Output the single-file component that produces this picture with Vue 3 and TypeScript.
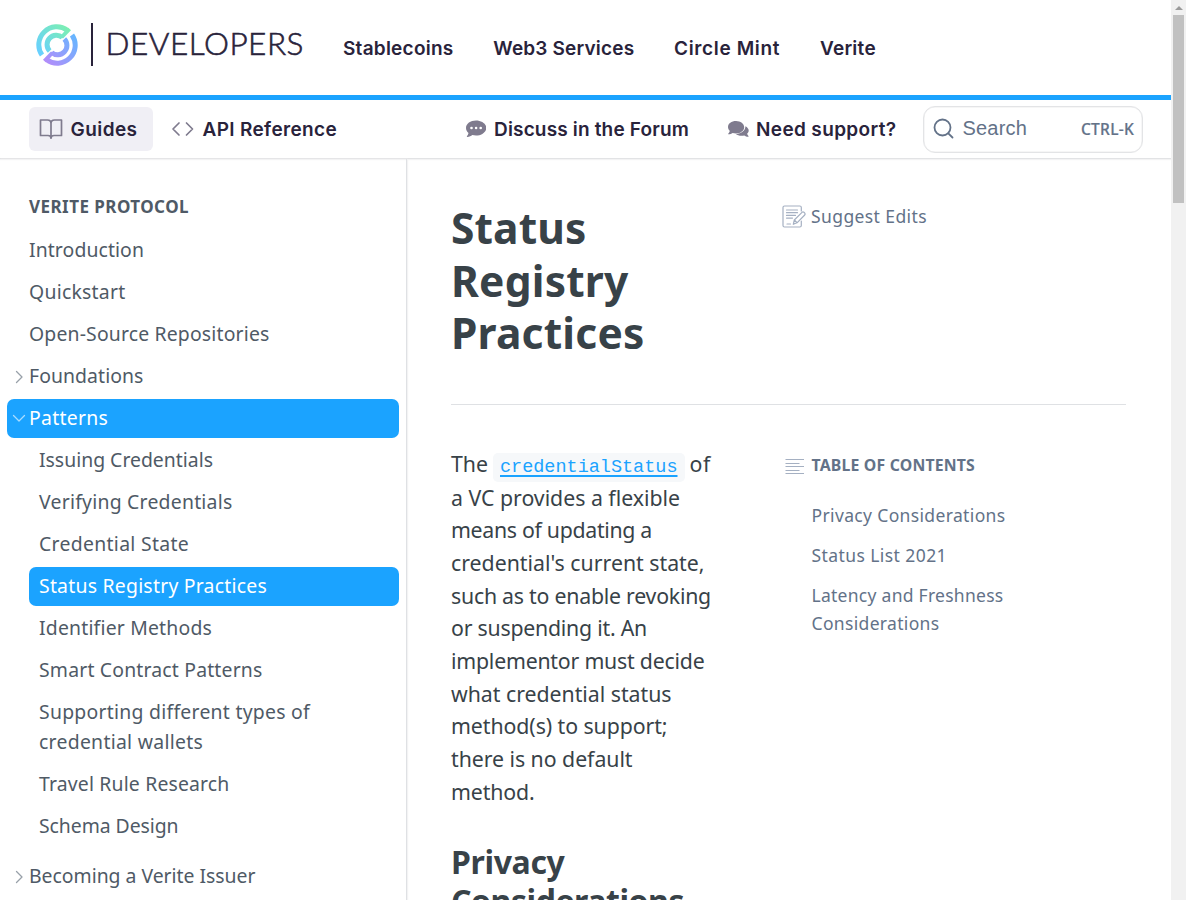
<script setup lang="ts">
import type { Directive } from 'vue'

interface Line { text: string; w: number }
interface Item { lines: Line[]; chevron?: 'right' | 'down'; active?: boolean; children?: Item[] }

// Tracks the text in or out so that it fills the given width in pixels.
const vFit: Directive<HTMLElement, number> = {
  mounted(el, { value }) {
    const n = (el.textContent ?? '').length
    const natural = el.getBoundingClientRect().width
    if (n > 0) el.style.letterSpacing = `${(value - natural) / n}px`
  },
}

const one = (text: string, w: number): Item => ({ lines: [{ text, w }] })

const products: Line[] = [
  { text: 'Stablecoins', w: 110.5 },
  { text: 'Web3 Services', w: 141 },
  { text: 'Circle Mint', w: 106 },
  { text: 'Verite', w: 56 },
]

const sidebar: Item[] = [
  one('Introduction', 115),
  one('Quickstart', 96.5),
  one('Open-Source Repositories', 240.5),
  { ...one('Foundations', 114.5), chevron: 'right' },
  {
    ...one('Patterns', 79),
    chevron: 'down',
    active: true,
    children: [
      one('Issuing Credentials', 174),
      one('Verifying Credentials', 193.5),
      one('Credential State', 150),
      { ...one('Status Registry Practices', 228), active: true },
      one('Identifier Methods', 173),
      one('Smart Contract Patterns', 223.5),
      { lines: [{ text: 'Supporting different types of', w: 271 }, { text: 'credential wallets', w: 164 }] },
      one('Travel Rule Research', 190.5),
      one('Schema Design', 139.5),
    ],
  },
  { ...one('Becoming a Verite Issuer', 226.5), chevron: 'right' },
]

const title: Line[] = [
  { text: 'Status', w: 135.5 },
  { text: 'Registry', w: 177.5 },
  { text: 'Practices', w: 193.5 },
]

const paragraph: Line[] = [
  { text: 'a VC provides a flexible', w: 229 },
  { text: 'means of updating a', w: 201 },
  { text: "credential's current state,", w: 253.5 },
  { text: 'such as to enable revoking', w: 260 },
  { text: 'or suspending it. An', w: 196 },
  { text: 'implementor must decide', w: 253.5 },
  { text: 'what credential status', w: 220.5 },
  { text: 'method(s) to support;', w: 216.5 },
  { text: 'there is no default', w: 181.5 },
  { text: 'method.', w: 83.5 },
]

const toc: Item[] = [
  one('Privacy Considerations', 194),
  one('Status List 2021', 135.5),
  { lines: [{ text: 'Latency and Freshness', w: 192 }, { text: 'Considerations', w: 128 }] },
]
</script>

<template>
  <div class="window">
    <div class="page">
      <header class="top">
        <div class="logo">
          <svg class="mark" viewBox="0 0 126 126">
            <defs>
              <linearGradient id="mint" gradientUnits="userSpaceOnUse" x1="5" y1="100" x2="100" y2="10">
                <stop offset="0.1" stop-color="#68d0ff" />
                <stop offset="1" stop-color="#7cf0b0" />
              </linearGradient>
              <linearGradient id="violet" gradientUnits="userSpaceOnUse" x1="30" y1="115" x2="120" y2="30">
                <stop offset="0" stop-color="#b28dfa" />
                <stop offset="1" stop-color="#62b8ff" />
              </linearGradient>
            </defs>
            <g stroke="url(#mint)" fill="none" stroke-width="15">
              <path d="M94 18.500A54 54 0 0 0 18 93" />
              <path d="M79 40A28 28 0 0 0 41 81" />
              <path d="M97 11L105 19L82 43L68 42L86 21Z" fill="url(#mint)" stroke="none" />
            </g>
            <g stroke="url(#violet)" fill="none" stroke-width="15">
              <path d="M108 33A54 54 0 0 1 32 107.500" />
              <path d="M85 45A28 28 0 0 1 47 86" />
              <path d="M29 115L21 107L44 83L58 84L40 105Z" fill="url(#violet)" stroke="none" />
            </g>
          </svg>
          <i class="rule"></i>
          <span v-fit="198.500" class="brand">DEVELOPERS</span>
        </div>
        <nav class="products">
          <a v-for="p in products" :key="p.text"><span v-fit="p.w">{{ p.text }}</span></a>
        </nav>
      </header>

      <div class="subnav">
        <a class="tab current">
          <svg width="24" height="24" viewBox="0 0 24 24" fill="none" stroke="#7f7b8e" stroke-width="1.700" stroke-linejoin="round">
            <path d="M12 6.500C12 4.500 10.500 3 8.500 3H1.500v15.500H9c1.800 0 3 .9 3 2.700 0-1.800 1.200-2.700 3-2.700h7.500V3h-7C13.500 3 12 4.500 12 6.500zV21" />
          </svg>
          <span v-fit="67">Guides</span>
        </a>
        <a class="tab">
          <svg width="24" height="24" viewBox="0 0 24 24" fill="none" stroke="#7f7b8e" stroke-width="1.700" stroke-linecap="round" stroke-linejoin="round">
            <path d="M8 6L2 12l6 6M15.500 6L21.500 12l-6 6" />
          </svg>
          <span v-fit="134.500">API Reference</span>
        </a>
        <a class="link forum">
          <svg width="20" height="20" viewBox="0 0 20 20">
            <path fill="#7f7b8e" d="M10 1.500C4.500 1.500 0 4.700 0 8.900c0 2 1 3.700 2.500 5-.2 1.300-.8 2.400-1.600 3.300-.3.400 0 .8.400.8 2.100 0 3.800-.8 5-1.900 1.100.3 2.400.5 3.700.5 5.500 0 10.300-3.500 10.300-7.700S15.500 1.500 10 1.500z" />
            <g fill="#fff"><circle cx="5.500" cy="9" r="1.300" /><circle cx="10.100" cy="9" r="1.300" /><circle cx="14.700" cy="9" r="1.300" /></g>
          </svg>
          <span v-fit="195">Discuss in the Forum</span>
        </a>
        <a class="link support">
          <svg width="21" height="20" viewBox="0 0 21 20">
            <path fill="#7f7b8e" d="M8 2C3.500 2 0 4.500 0 8c0 1.500.7 2.900 1.800 4-.3 1-.9 2-1.600 2.700-.2.300 0 .6.300.6 1.600 0 3-.5 4.100-1.400 1.100.300 2.200.5 3.400.5 4.600 0 8.200-2.800 8.200-6.200S12.500 2 8 2z" />
            <path fill="#7f7b8e" d="M17.400 7.200c2 1 3.300 2.600 3.300 4.300 0 1.300-.6 2.400-1.600 3.300.3 1 .8 1.700 1.400 2.300.3.300.1.600-.3.600-1.500 0-2.800-.5-3.900-1.300-3.500.9-6.700 0-8.400-1.500 5.500-.3 9.700-3.500 9.500-7.700z" />
          </svg>
          <span v-fit="140.500">Need support?</span>
        </a>
        <div class="search">
          <svg width="22" height="22" viewBox="0 0 22 22" fill="none" stroke="#637288" stroke-width="1.800" stroke-linecap="round">
            <circle cx="9.500" cy="9.500" r="8" /><path d="M15.300 15.300L19.500 19.500" />
          </svg>
          <span v-fit="64.500" class="hint">Search</span>
          <span v-fit="53" class="keys">CTRL-K</span>
        </div>
      </div>

      <div class="body">
        <aside class="side">
          <h2><span v-fit="160">VERITE PROTOCOL</span></h2>
          <template v-for="item in sidebar" :key="item.lines[0].text">
            <a class="row" :class="{ active: item.active }">
              <svg v-if="item.chevron" class="chev" :class="item.chevron" width="14" height="14" viewBox="0 0 14 14" fill="none" stroke-width="1.300" stroke-linecap="round" stroke-linejoin="round">
                <path d="M4.500 1.500L10 7l-5.500 5.500" />
              </svg>
              <span v-for="l in item.lines" :key="l.text" class="line"><span v-fit="l.w">{{ l.text }}</span></span>
            </a>
            <div v-if="item.children" class="kids">
              <a v-for="kid in item.children" :key="kid.lines[0].text" class="row kid" :class="{ active: kid.active }">
                <span v-for="l in kid.lines" :key="l.text" class="line"><span v-fit="l.w">{{ l.text }}</span></span>
              </a>
            </div>
          </template>
        </aside>

        <main class="content">
          <div class="heading">
            <h1><span v-for="l in title" :key="l.text" class="line"><span v-fit="l.w">{{ l.text }}</span></span></h1>
            <a class="suggest">
              <svg width="24" height="24" viewBox="0 0 24 24" fill="none" stroke="#a5b0c2" stroke-width="1.200" stroke-linejoin="round" stroke-linecap="round">
                <path d="M19.300 6V2.500q0-1.500-1.500-1.500H2.500Q1 1 1 2.500v18Q1 22 2.500 22h15.300q1.500 0 1.500-1.500V16" />
                <path d="M4.500 5h11M4.500 7.700h11M4.500 10.400h9M4.500 13.100h6M5 19h3.500" />
                <path d="M11.300 19.300l1-4.300 7.700-7.700q1-.8 2 0l.7.700q.8 1 0 2L15 17.800zM12.400 15l2.600 2.700" fill="#fff" />
              </svg>
              <span v-fit="116">Suggest Edits</span>
            </a>
          </div>

          <div class="columns">
            <article>
              <p>
                <span class="line first"><span v-fit="37">The</span><code><a v-fit="177.500">credentialStatus</a></code><span v-fit="21.500">of</span></span>
                <span v-for="l in paragraph" :key="l.text" class="line"><span v-fit="l.w">{{ l.text }}</span></span>
              </p>
              <h3>
                <span class="line"><span v-fit="113.500">Privacy</span></span>
                <span class="line"><span v-fit="233">Considerations</span></span>
              </h3>
            </article>
            <section class="toc">
              <h4>
                <svg width="20" height="18" viewBox="0 0 20 18" stroke="#a5b0c2" stroke-width="1.200">
                  <path d="M.5 1.500h18.500M.5 5.500h14M.5 8.500h18.500M.5 12.500h14M.5 15.500h18.500" />
                </svg>
                <span v-fit="163.500">TABLE OF CONTENTS</span>
              </h4>
              <a v-for="t in toc" :key="t.lines[0].text">
                <span v-for="l in t.lines" :key="l.text" class="line"><span v-fit="l.w">{{ l.text }}</span></span>
              </a>
            </section>
          </div>
        </main>
      </div>
    </div>
    <div class="scrollbar"><i class="up"></i><i class="thumb"></i></div>
  </div>
</template>

<style>
body { margin: 0; }
</style>

<style scoped>
* { box-sizing: border-box; }
.window { display: flex; width: 1186px; height: 900px; overflow: hidden; background: #fff; font-family: "Noto Sans", "Open Sans", sans-serif; font-size: 19.4px; color: #4f5a66; }
.page { width: 1171px; height: 900px; overflow: hidden; }
h1, h2, h3, h4, p { margin: 0; }
span, a { white-space: nowrap; }
.line { display: block; }
svg { display: block; flex: none; }

.top { display: flex; align-items: center; height: 100px; border-bottom: 5px solid #1ba3ff; padding-left: 36px; }
.logo { display: flex; align-items: center; width: 287px; height: 50px; margin-top: -6px; }
.mark { width: 42px; height: 42px; }
.rule { width: 2px; height: 43px; margin: 0 12.500px 0 13px; background: #29233b; }
.brand { font-family: Lato, sans-serif; font-weight: 300; font-size: 31.500px; line-height: 44px; margin-top: -3px; color: #29233b; -webkit-text-stroke: 0.600px #29233b; }
.products { display: flex; font: 600 19px/30px Inter, sans-serif; color: #29233b; padding-top: 2px; }
.products a { padding: 0 20px; }
.products a + a { padding-left: 19.800px; }

.subnav { display: flex; align-items: center; height: 59px; border-bottom: 1px solid #e2e3e5; padding-left: 29px; font: 600 19px/30px Inter, sans-serif; color: #29233b; box-shadow: 0 1px 1px #f3f3f4; }
.tab > span, .link > span { padding-top: 2px; }
.tab { display: flex; align-items: center; gap: 8px; width: 124px; height: 44px; border-radius: 6px; padding-left: 9.500px; }
.tab + .tab { width: 200px; margin-left: 8px; }
.current { background: #f0eff5; }
.link { display: flex; align-items: center; gap: 8px; }
.forum { margin-left: 105px; width: 262px; }
.support { width: 196px; gap: 7px; }
.search { display: flex; align-items: center; width: 220px; height: 47px; margin: 0 0 0 -1px; border: 1px solid #e3e4e6; border-radius: 12px; padding: 0 8px 1px 9px; box-shadow: inset 0 0 0 0.500px #ededee; color: #637288; }
.hint { margin: -1px auto 0 7.500px; font: 20px/30px "Liberation Sans", Arial, sans-serif; }
.keys { font: 500 15.500px/30px "Noto Sans", sans-serif; -webkit-text-stroke: 0.200px #637288; }

.body { display: flex; height: 741px; }
.side { width: 407px; border-right: 1px solid #dfe1e4; box-shadow: 1px 0 1px #f3f3f4; padding: 33px 7px 0; }
h2 { font-size: 17px; line-height: 30px; padding-left: 22px; margin-bottom: 9px; }
.row { display: block; position: relative; line-height: 30px; padding: 4px 0 5px 22px; border-radius: 7px; margin-bottom: 3px; }
.kids { padding: 0 0 8px 22px; }
.kid { padding-left: 10px; }
.active { background: #1ba3ff; color: #fff; }
.chev { position: absolute; left: 4.500px; top: 13px; stroke: #98a0a9; }
.down { top: 12px; transform: rotate(90deg); stroke: #a9dcff; }

.content { width: 764px; padding: 43px 45px 0 44px; color: #384248; }
.heading { display: flex; height: 203px; border-bottom: 1px solid #dfe1e4; }
h1 { width: 331.500px; font-size: 42.500px; line-height: 52.500px; color: #384248; }
.suggest { display: flex; align-items: center; gap: 5px; height: 28px; font-size: 17.500px; color: #637288; }
.suggest svg { margin: 1px 0 0 -0.500px; }
.columns { display: flex; padding-top: 43px; }
article { width: 333.500px; }
p { font-size: 21.300px; line-height: 32.700px; }
.first { display: flex; align-items: center; height: 33.500px; }
code { margin: 5px 5px 0; height: 29px; padding: 1px 7px 0; border-radius: 5px; background: #f6f8fa; font: 18.500px/28px "Liberation Mono", monospace; color: #1ba3ff; }
code a { text-decoration: underline; text-underline-offset: 3px; text-decoration-thickness: 2px; }
h3 { margin-top: 33px; font-size: 32px; line-height: 39px; }
.toc { color: #637288; font-size: 17.500px; }
h4 { display: flex; align-items: center; gap: 7px; font-size: 15.800px; line-height: 30px; margin: 2px 0 15px; }
h4 svg { margin-top: 4px; }
.toc > a { display: block; padding: 6px 0 6px 27px; line-height: 28px; }

.scrollbar { width: 15px; height: 900px; background: #f1f1f1; }
.up { display: block; width: 0; height: 10px; margin: 0 auto 5px; border: 4px solid transparent; border-top-width: 6px; border-bottom-color: #9b9b9b; }
.thumb { display: block; width: 11px; height: 188px; margin: 0 2px; background: #c1c1c1; }
</style>
